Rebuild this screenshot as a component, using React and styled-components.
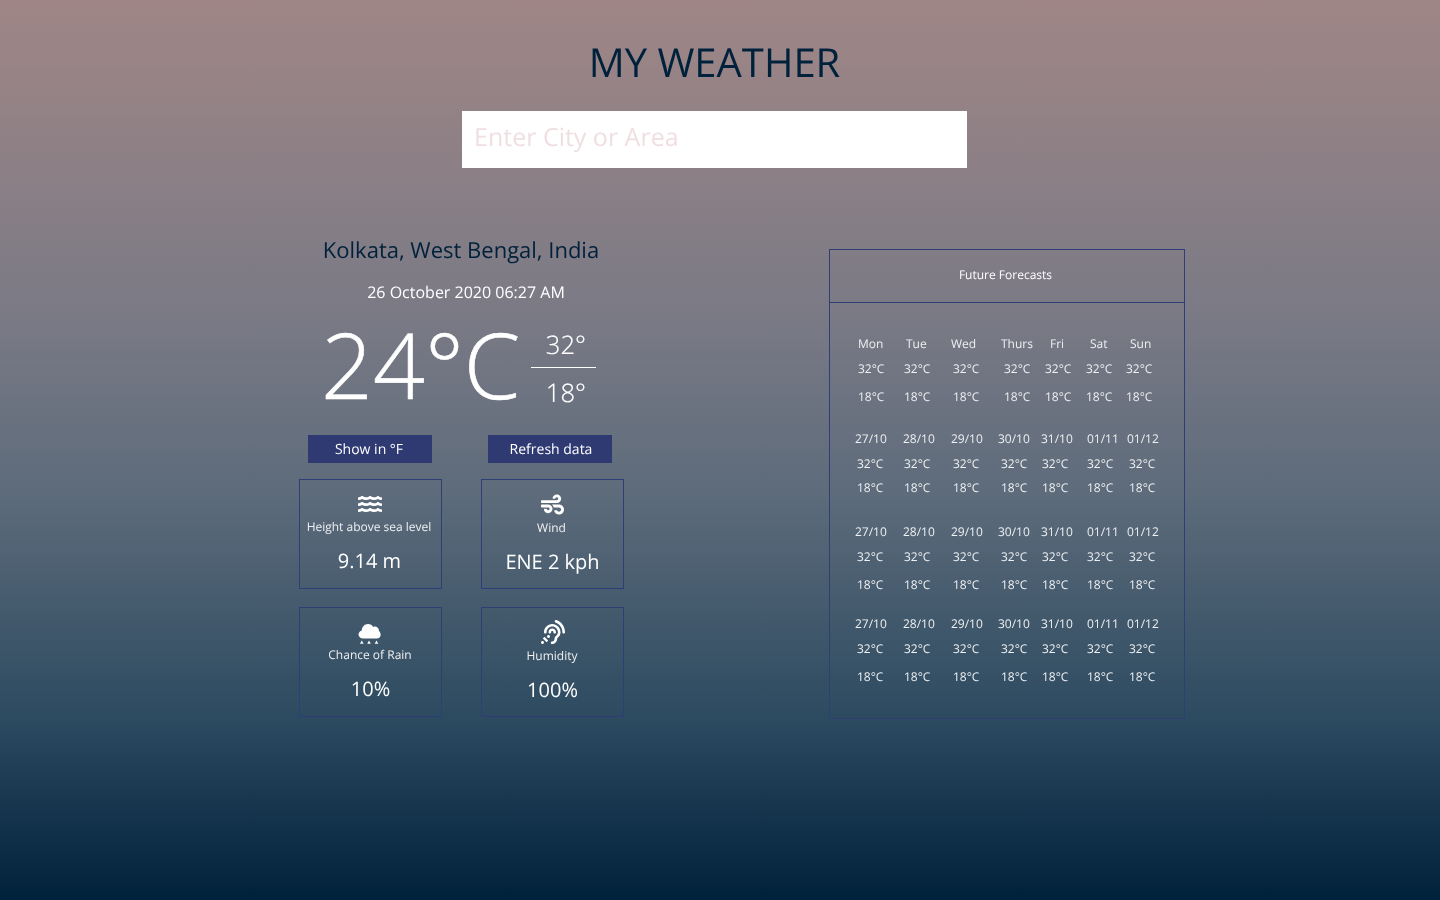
import React from "react";
import styled, { createGlobalStyle } from "styled-components";
import { FaWater, FaWind, FaAssistiveListeningSystems } from "react-icons/fa";

const GlobalStyle = createGlobalStyle`
  html, body {
    margin: 0;
    padding: 0;
  }

  body {
    font-family: "Open Sans", sans-serif;
    text-rendering: geometricPrecision;
    color: #fff;
  }
`;

const Page = styled.div`
  width: 1440px;
  height: 900px;
  overflow: hidden;
  background: linear-gradient(180deg, #a08686 0%, #7a7a85 35%, #5d6b7b 55%, #2c4a60 80%, #00213b 100%);
`;

const Header = styled.header`
  width: 505px;
  margin-left: 462px;
  padding-top: 34px;
  display: flex;
  flex-direction: column;
  align-items: center;
  will-change: transform;
`;

const Title = styled.h1`
  margin: 0 0 21px;
  font-size: 40px;
  line-height: 56px;
  font-weight: 400;
  color: #00213b;
`;

const SearchInput = styled.input`
  box-sizing: border-box;
  width: 505px;
  height: 57px;
  padding: 0 12px 6px;
  border: none;
  background: #fff;
  font-family: inherit;
  font-size: 25px;
  text-rendering: geometricPrecision;

  &::placeholder {
    color: #f0dfe1;
    opacity: 1;
  }
`;

const Main = styled.main`
  display: flex;
  align-items: flex-start;
  padding: 66px 0 20px 298px;
`;

const Current = styled.section`
  width: 326px;
  margin-right: 205px;
  will-change: transform;
`;

const City = styled.h2`
  margin: 1px 0 0;
  font-size: 22px;
  line-height: 30px;
  font-weight: 400;
  color: #00213b;
  text-align: center;
`;

const DateLine = styled.p`
  margin: 16px 0 0 10px;
  font-size: 16px;
  line-height: 22px;
  font-weight: 400;
  text-align: center;
`;

const TempRow = styled.div`
  display: flex;
  align-items: center;
  margin: 14px 0 0 23px;
  height: 94px;
`;

const BigTemp = styled.span`
  font-size: 91px;
  line-height: 94px;
  font-weight: 300;
  -webkit-text-stroke: 0.6px #fff;
`;

const HiLo = styled.div`
  width: 65px;
  margin: 10px 0 0 11px;
  text-align: center;
  font-size: 25.5px;
  line-height: 34px;
  font-weight: 300;
  -webkit-text-stroke: 0.2px #fff;
`;

const Hi = styled.div`
  padding: 0 0 5px 4px;
  border-bottom: 1px solid #fff;
`;

const Lo = styled.div`
  padding: 8px 0 0 4px;
`;

const Actions = styled.div`
  display: flex;
  gap: 56px;
  margin: 24px 0 16px 10px;
`;

const ActionButton = styled.button`
  width: 124px;
  height: 28px;
  padding: 0 ${props => props.$padRight}px 0 ${props => props.$padLeft}px;
  border: none;
  background: #2f3a73;
  color: #fff;
  font-family: inherit;
  font-size: 14px;
  font-weight: 400;
  text-rendering: geometricPrecision;
`;

const Cards = styled.div`
  display: grid;
  grid-template-columns: 143px 143px;
  column-gap: 39px;
  row-gap: 18px;
  margin-left: 1px;
`;

const Card = styled.div`
  box-sizing: border-box;
  height: 110px;
  padding-top: 12px;
  border: 1px solid #303e78;
  display: flex;
  flex-direction: column;
  align-items: center;
`;

const CardIcon = styled.div`
  height: 24px;
  margin-right: ${props => props.$nudge}px;
  display: flex;
  align-items: center;
  justify-content: center;
  font-size: ${props => props.$size}px;
`;

const CardLabel = styled.div`
  margin-top: ${props => props.$top}px;
  margin-right: ${props => props.$nudge}px;
  font-size: 12px;
  line-height: 18px;
  font-weight: 400;
  color: #eef0f2;
`;

const CardValue = styled.div`
  margin-top: 11px;
  margin-right: ${props => props.$nudge}px;
  font-size: 20px;
  line-height: 28px;
  font-weight: 400;
`;

const Forecast = styled.section`
  box-sizing: border-box;
  width: 356px;
  height: 470px;
  margin-top: 15px;
  border: 1px solid #303e78;
  will-change: transform;
`;

const ForecastTitle = styled.div`
  box-sizing: border-box;
  height: 53px;
  padding: 0 3px 3px 0;
  border-bottom: 1px solid #303e78;
  display: flex;
  align-items: center;
  justify-content: center;
  font-size: 12px;
`;

const Row = styled.div`
  display: grid;
  grid-template-columns: ${props => props.$tracks};
  height: 20px;
  margin-top: ${props => props.$gap}px;
  padding-left: ${props => props.$start}px;
  font-size: 12px;
  line-height: 20px;
  color: #eef0f2;
`;

// cloud with three small drops, the fa one has the wrong rain
const RainCloud = () => (
  <svg width="23" height="23" viewBox="0 0 23 23" fill="#fff">
    <path d="M5 17.500C2.400 17.500 .5 15.800 .5 13.500 .5 11.400 2 9.800 3.800 9.400 3.900 5.900 6.500 3 10 3c2.300 0 4.200 1.200 5.200 3 .5-.3 1.100-.4 1.700-.4 2.200 0 3.900 1.700 4 3.900C22 11.100 22.700 12.300 22.700 13.800c0 2.100-1.700 3.700-3.800 3.700z" />
    <path d="M3.800 19.500l1.800 3.300H2zM11 19.500l1.800 3.300H9.200zM18.500 19.500l1.800 3.300h-3.600z" />
  </svg>
);

const days = ["Mon", "Tue", "Wed", "Thurs", "Fri", "Sat", "Sun"];
const dates = ["27/10", "28/10", "29/10", "30/10", "31/10", "01/11", "01/12"];
const highs = days.map(() => "32°C");
const lows = days.map(() => "18°C");

const headLefts = [858, 906, 951, 1001, 1050, 1090, 1130];
const firstLefts = [858, 904, 953, 1004, 1045, 1086, 1126];
const dateLefts = [855, 903, 951, 998, 1041, 1087, 1127];
const tempLefts = [857, 904, 953, 1001, 1042, 1087, 1129];

const rows = [
  { cells: days, lefts: headLefts, gap: 31 },
  { cells: highs, lefts: firstLefts, gap: 5 },
  { cells: lows, lefts: firstLefts, gap: 8 },
  { cells: dates, lefts: dateLefts, gap: 22 },
  { cells: highs, lefts: tempLefts, gap: 5 },
  { cells: lows, lefts: tempLefts, gap: 4 },
  { cells: dates, lefts: dateLefts, gap: 24 },
  { cells: highs, lefts: tempLefts, gap: 5 },
  { cells: lows, lefts: tempLefts, gap: 8 },
  { cells: dates, lefts: dateLefts, gap: 19 },
  { cells: highs, lefts: tempLefts, gap: 5 },
  { cells: lows, lefts: tempLefts, gap: 8 }
];

const tracksOf = lefts =>
  lefts.map((left, i) => (i < 6 ? `${lefts[i + 1] - left}px` : "auto")).join(" ");

const stats = [
  { icon: <FaWater />, size: 24, iconNudge: 2, labelNudge: 3, labelTop: 2, valueNudge: 2, label: "Height above sea level", value: "9.14 m" },
  { icon: <FaWind />, size: 23, iconNudge: 0, labelNudge: 2, labelTop: 3, valueNudge: 0, label: "Wind", value: "ENE 2 kph" },
  { icon: <RainCloud />, size: 24, iconNudge: 2, labelNudge: 1, labelTop: 2, valueNudge: 0, label: "Chance of Rain", value: "10%" },
  { icon: <FaAssistiveListeningSystems />, size: 24, iconNudge: 0, labelNudge: 1, labelTop: 3, valueNudge: 0, label: "Humidity", value: "100%" }
];

const App = () => (
  <Page>
    <GlobalStyle />
    <Header>
      <Title>MY WEATHER</Title>
      <SearchInput placeholder="Enter City or Area" />
    </Header>
    <Main>
      <Current>
        <City>Kolkata, West Bengal, India</City>
        <DateLine>26 October 2020 06:27 AM</DateLine>
        <TempRow>
          <BigTemp>24°C</BigTemp>
          <HiLo>
            <Hi>32°</Hi>
            <Lo>18°</Lo>
          </HiLo>
        </TempRow>
        <Actions>
          <ActionButton $padLeft={0} $padRight={2}>Show in °F</ActionButton>
          <ActionButton $padLeft={2} $padRight={0}>Refresh data</ActionButton>
        </Actions>
        <Cards>
          {stats.map(stat => (
            <Card key={stat.label}>
              <CardIcon $size={stat.size} $nudge={stat.iconNudge}>{stat.icon}</CardIcon>
              <CardLabel $nudge={stat.labelNudge} $top={stat.labelTop}>{stat.label}</CardLabel>
              <CardValue $nudge={stat.valueNudge}>{stat.value}</CardValue>
            </Card>
          ))}
        </Cards>
      </Current>
      <Forecast>
        <ForecastTitle>Future Forecasts</ForecastTitle>
        {rows.map((row, i) => (
          <Row key={i} $tracks={tracksOf(row.lefts)} $gap={row.gap} $start={row.lefts[0] - 830}>
            {row.cells.map((cell, j) => (
              <span key={j}>{cell}</span>
            ))}
          </Row>
        ))}
      </Forecast>
    </Main>
  </Page>
);

export default App;
